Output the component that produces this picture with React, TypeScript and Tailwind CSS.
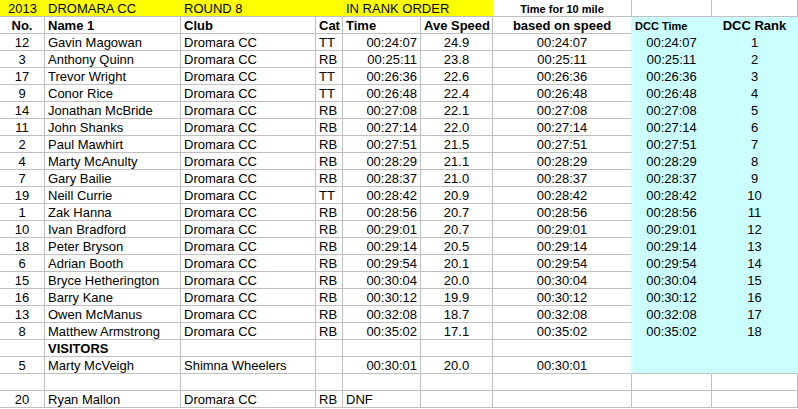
const riders = [
  ["12", "Gavin Magowan", "TT", "00:24:07", "24.9"],
  ["3", "Anthony Quinn", "RB", "00:25:11", "23.8"],
  ["17", "Trevor Wright", "TT", "00:26:36", "22.6"],
  ["9", "Conor Rice", "TT", "00:26:48", "22.4"],
  ["14", "Jonathan McBride", "RB", "00:27:08", "22.1"],
  ["11", "John Shanks", "RB", "00:27:14", "22.0"],
  ["2", "Paul Mawhirt", "RB", "00:27:51", "21.5"],
  ["4", "Marty McAnulty", "RB", "00:28:29", "21.1"],
  ["7", "Gary Bailie", "RB", "00:28:37", "21.0"],
  ["19", "Neill Currie", "TT", "00:28:42", "20.9"],
  ["1", "Zak Hanna", "RB", "00:28:56", "20.7"],
  ["10", "Ivan Bradford", "RB", "00:29:01", "20.7"],
  ["18", "Peter Bryson", "RB", "00:29:14", "20.5"],
  ["6", "Adrian Booth", "RB", "00:29:54", "20.1"],
  ["15", "Bryce Hetherington", "RB", "00:30:04", "20.0"],
  ["16", "Barry Kane", "RB", "00:30:12", "19.9"],
  ["13", "Owen McManus", "RB", "00:32:08", "18.7"],
  ["8", "Matthew Armstrong", "RB", "00:35:02", "17.1"],
];

const cell = "h-[17px] border-b border-r border-[#c0c0c0] px-[3px] leading-[18px] whitespace-nowrap";
const cyan = "h-[17px] border-b border-r border-[#ccffff] bg-[#ccffff] px-[3px] leading-[18px] whitespace-nowrap";
const cyanLast = "h-[17px] border-b border-r border-[#ccffff] border-b-[#c0c0c0] bg-[#ccffff] px-[3px] leading-[18px] whitespace-nowrap";
const col6 = "h-[17px] border-b border-r border-[#c0c0c0] border-r-[#ccffff] px-[3px] leading-[18px] whitespace-nowrap text-center";

function Row({
  no = "",
  name = "",
  club = "",
  cat = "",
  time = "",
  speed = "",
  based = "",
  dcc = "",
  rank = "",
  last = false,
  bold = false,
}: {
  no?: string;
  name?: string;
  club?: string;
  cat?: string;
  time?: string;
  speed?: string;
  based?: string;
  dcc?: string;
  rank?: string;
  last?: boolean;
  bold?: boolean;
}) {
  const c = last ? cyanLast : cyan;
  return (
    <>
      <div className={`${cell} text-center`}>{no}</div>
      <div className={`${cell} ${bold ? "font-bold" : ""}`}>{name}</div>
      <div className={cell}>{club}</div>
      <div className={cell}>{cat}</div>
      <div className={`${cell} text-right`}>{time}</div>
      <div className={`${cell} text-center`}>{speed}</div>
      <div className={col6}>{based}</div>
      <div className={`${c} text-center`}>{dcc}</div>
      <div className={`${c} text-center`}>{rank}</div>
    </>
  );
}

export default function App() {
  return (
    <div
      className="w-[798px] h-[409px] bg-white text-black text-[13px] overflow-hidden"
      style={{ fontFamily: '"Liberation Sans", Arial, sans-serif' }}
    >
      <div className="grid grid-cols-[45px_136px_135px_27px_78px_72px_139px_80px_86px]">
        {/* title row */}
        <div className="col-span-6 grid grid-cols-[45px_136px_135px_27px_78px_72px] h-[17px] bg-[#ffff00] border-b border-[#c0c0c0] leading-[18px] whitespace-nowrap">
          <div className="text-center">2013</div>
          <div className="px-[3px]">DROMARA CC</div>
          <div className="px-[3px]">ROUND 8</div>
          <div />
          <div className="px-[3px]">IN RANK ORDER</div>
          <div />
        </div>
        <div className={`${cell} text-center text-[11px] font-bold leading-[19px]`}>Time for 10 mile</div>
        <div className={cell} />
        <div className={cell} />

        {/* header row */}
        <div className={`${cell} text-center font-bold`}>No.</div>
        <div className={`${cell} font-bold`}>Name 1</div>
        <div className={`${cell} font-bold`}>Club</div>
        <div className={`${cell} font-bold`}>Cat</div>
        <div className={`${cell} font-bold`}>Time</div>
        <div className={`${cell} text-center font-bold`}>Ave Speed</div>
        <div className={`${col6} font-bold`}>based on speed</div>
        <div className={`${cyan} text-[11px] font-bold leading-[19px]`}>DCC Time</div>
        <div className={`${cyan} text-center font-bold`}>DCC Rank</div>

        {riders.map(([no, name, cat, time, speed], i) => (
          <Row
            key={no}
            no={no}
            name={name}
            club="Dromara CC"
            cat={cat}
            time={time}
            speed={speed}
            based={time}
            dcc={time}
            rank={String(i + 1)}
          />
        ))}

        <Row name="VISITORS" bold />
        <Row no="5" name="Marty McVeigh" club="Shimna Wheelers" time="00:30:01" speed="20.0" based="00:30:01" last />

        {/* blank row */}
        <div className={cell} />
        <div className={cell} />
        <div className={cell} />
        <div className={cell} />
        <div className={cell} />
        <div className={cell} />
        <div className={cell} />
        <div className={cell} />
        <div className={cell} />

        <div className={`${cell} text-center`}>20</div>
        <div className={cell}>Ryan Mallon</div>
        <div className={cell}>Dromara CC</div>
        <div className={cell}>RB</div>
        <div className={cell}>DNF</div>
        <div className={cell} />
        <div className={cell} />
        <div className={cell} />
        <div className={cell} />
      </div>
    </div>
  );
}
